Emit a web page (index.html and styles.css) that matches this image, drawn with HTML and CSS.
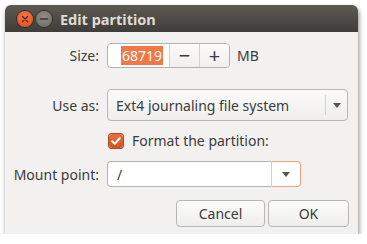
FILE: index.html
```html
<!DOCTYPE html>
<html>
<head>
<meta charset="utf-8">
<link rel="stylesheet" href="styles.css">
</head>
<body>
<div class="window">
  <div class="titlebar">
    <span class="wbtn close"><svg width="16" height="16" viewBox="0 0 16 16"><path d="M5.5 5.5l5 5M10.5 5.5l-5 5" stroke="#5a2412" stroke-width="1.4" stroke-linecap="round"/></svg></span>
    <span class="wbtn min"><svg width="16" height="16" viewBox="0 0 16 16"><path d="M4.5 8h7" stroke="#3a3935" stroke-width="1.5" stroke-linecap="round"/></svg></span>
    <span class="title">Edit partition</span>
  </div>
  <div class="content">
    <div class="row r1">
      <span class="label">Size:</span>
      <div class="spin">
        <span class="spin-entry"><span class="sel">68719</span></span>
        <span class="spin-btn">−</span>
        <span class="spin-btn last">+</span>
      </div>
      <span class="unit">MB</span>
    </div>
    <div class="row r2">
      <span class="label">Use as:</span>
      <div class="combo">
        <span class="combo-text">Ext4 journaling file system</span>
        <span class="combo-arrow"><span class="tri"></span></span>
      </div>
    </div>
    <div class="row r3">
      <span class="label"></span>
      <span class="check"><svg width="14" height="14" viewBox="0 0 14 14"><path d="M3.2 7.2l2.6 2.6 5-5.6" fill="none" stroke="#fff" stroke-width="2" stroke-linecap="round" stroke-linejoin="round"/></svg></span>
      <span class="check-label">Format the partition:</span>
    </div>
    <div class="row r4">
      <span class="label">Mount point:</span>
      <div class="mount">
        <span class="mount-entry">/</span>
        <span class="mount-arrow"><span class="tri"></span></span>
      </div>
    </div>
    <div class="buttons">
      <span class="btn cancel">Cancel</span>
      <span class="btn ok">OK</span>
    </div>
  </div>
</div>
</body>
</html>
```
FILE: styles.css
```css
html, body { margin: 0; padding: 0; background: #ffffff; }
body { font-family: "Noto Sans", "DejaVu Sans", sans-serif; font-size: 14px; color: #3c3c3c; }
.window {
  margin: 5px 0 0 5px;
  width: 353px;
  height: 229px;
  background: #f2f1f0;
  border-radius: 6px 6px 0 0;
  box-shadow: 1px 3px 5px rgba(0,0,0,0.45);
  overflow: hidden;
}
.titlebar {
  height: 27px;
  background: linear-gradient(#5c5a52, #3e3d39);
  display: flex;
  align-items: center;
  padding-left: 12px;
  box-sizing: border-box;
}
.wbtn {
  width: 16px; height: 16px; border-radius: 50%;
  display: flex; margin-right: 3px;
}
.wbtn svg { display: block; }
.close { background: radial-gradient(circle at 50% 35%, #f47a4a, #dc4a1c); box-shadow: 0 0 0 1px #3a2a22; }
.min { background: radial-gradient(circle at 50% 35%, #8e8c84, #6c6a64); box-shadow: 0 0 0 1px #33322e; }
.title { color: #dfdbd2; font-weight: bold; font-size: 14.5px; margin-left: 5px; }
.content { padding: 11px 0 0 0; }
.row { display: flex; align-items: center; }
.label { width: 94px; text-align: right; margin-right: 8px; flex: none; }
.r1 { height: 25px; }
.r2 { height: 32px; margin-top: 21px; }
.r3 { height: 15px; margin-top: 12px; }
.r4 { height: 26px; margin-top: 13px; }
.spin {
  display: flex; height: 25px; box-sizing: border-box;
  border: 1px solid #b4b2ae; border-radius: 4px; background: #fff;
}
.spin-entry { width: 61px; display: flex; align-items: center; justify-content: flex-end; padding-right: 6px; box-sizing: border-box; }
.sel { background: #f07746; color: #fff; line-height: 19px; padding: 0 1px; }
.spin-btn {
  width: 29px; display: flex; align-items: center; justify-content: center;
  border-left: 1px solid #d4d2ce; font-size: 20px; font-weight: normal; color: #3c3c3c;
  background: linear-gradient(#fbfbfa, #f0efee);
}
.spin-btn.last { border-radius: 0 3px 3px 0; }
.unit { margin-left: 7px; }
.combo {
  width: 241px; height: 32px; box-sizing: border-box;
  border: 1px solid #b8b6b2; border-radius: 4px;
  background: linear-gradient(#fbfbfa, #efeeed);
  display: flex; align-items: center;
}
.combo-text { flex: 1; padding-left: 8px; }
.combo-arrow { width: 21px; height: 20px; border-left: 1px solid #d2d0cc; display: flex; align-items: center; justify-content: center; }
.tri { width: 0; height: 0; border-left: 4px solid transparent; border-right: 4px solid transparent; border-top: 5px solid #555; }
.check {
  width: 14px; height: 14px; border-radius: 3px; margin-left: 2px;
  background: linear-gradient(#e8703f, #cf5424); box-shadow: 0 0 0 1px #b5481f;
  display: flex;
}
.check svg { display: block; }
.check-label { margin-left: 9px; }
.mount { display: flex; height: 26px; }
.mount-entry {
  width: 164px; box-sizing: border-box; background: #fff;
  border: 1px solid #b4b2ae; border-right: none; border-radius: 4px 0 0 4px;
  padding-left: 9px; display: flex; align-items: center;
}
.mount-arrow {
  width: 30px; box-sizing: border-box; background: #fff;
  border: 1px solid #f0a07c; border-left-color: #f6c4ad; border-radius: 0 4px 4px 0;
  display: flex; align-items: center; justify-content: center;
}
.buttons { display: flex; justify-content: flex-end; gap: 3px; margin-top: 13px; padding-right: 9px; }
.btn {
  height: 27px; box-sizing: border-box; border: 1px solid #b8b6b2; border-radius: 4px;
  background: linear-gradient(#fbfbfa, #efeeed);
  display: flex; align-items: center; justify-content: center;
}
.cancel { width: 89px; }
.ok { width: 81px; }
```
